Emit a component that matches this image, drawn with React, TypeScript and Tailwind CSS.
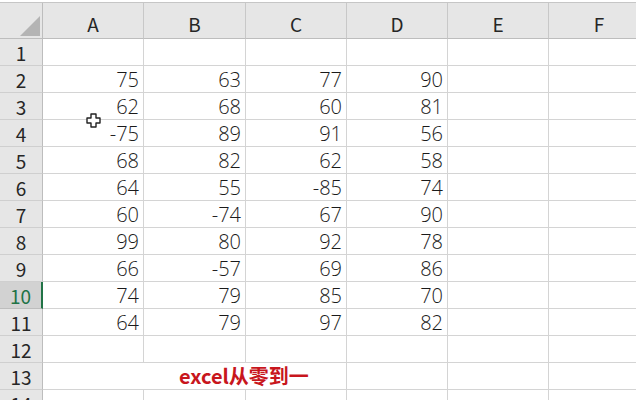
import React from 'react';

const cols = ['A', 'B', 'C', 'D', 'E', 'F'];

const rows: (number | null)[][] = [
  [null, null, null, null],
  [75, 63, 77, 90],
  [62, 68, 60, 81],
  [-75, 89, 91, 56],
  [68, 82, 62, 58],
  [64, 55, -85, 74],
  [60, -74, 67, 90],
  [99, 80, 92, 78],
  [66, -57, 69, 86],
  [74, 79, 85, 70],
  [64, 79, 97, 82],
  [null, null, null, null],
];

const font = { fontFamily: '"Noto Sans CJK SC", "Noto Sans", sans-serif' };
const numFont = { fontFamily: '"Open Sans", "Noto Sans CJK SC", sans-serif' };

const RowHead = ({ n, active }: { n: number; active?: boolean }) => (
  <div
    className={`h-[27px] flex items-center justify-center border-b text-[19px] leading-none ${
      active
        ? 'bg-[#d2d2d2] text-[#217346] border-r-2 border-r-[#217346] border-b-[#bdbdbd]'
        : 'bg-[#e6e6e6] text-[#262626] border-r border-r-[#bdbdbd] border-b-[#cfcfcf]'
    }`}
  >
    {n}
  </div>
);

const Cell = ({ v }: { v?: number | null }) => (
  <div
    className="h-[27px] border-r border-b border-[#d4d4d4] flex items-center justify-end pr-[4px] pt-[1px] text-[20px] font-light text-[#1a1a1a] leading-none"
    style={numFont}
  >
    {v ?? ''}
  </div>
);

const CursorIcon = () => (
  <svg className="absolute left-[86px] top-[113px]" width="15" height="15" viewBox="0 0 15 15">
    <path
      d="M5 1h5v4h4v5h-4v4H5v-4H1V5h4z"
      fill="#fff"
      stroke="#222"
      strokeWidth="1.4"
      strokeLinejoin="round"
    />
  </svg>
);

export default function App() {
  return (
    <div className="relative w-[636px] h-[400px] overflow-hidden bg-white" style={font}>
      <div className="h-[3px] bg-white border-b border-[#c6c6c6]" />
      <div className="grid grid-cols-[43px_101px_102px_101px_101px_101px_101px] w-max">
        {/* header */}
        <div className="h-[36px] bg-[#e6e6e6] border-r border-b border-[#bdbdbd] flex items-end justify-end pr-[2px] pb-[2px]">
          <svg width="20" height="20" viewBox="0 0 20 20">
            <polygon points="20,0 20,20 0,20" fill="#b4b4b4" />
          </svg>
        </div>
        {cols.map((c) => (
          <div
            key={c}
            className="h-[36px] bg-[#e6e6e6] border-r border-r-[#c8c8c8] border-b border-b-[#bdbdbd] flex items-end justify-center pb-[5px] text-[19px] leading-none text-[#262626]"
          >
            {c}
          </div>
        ))}

        {rows.map((r, i) => (
          <React.Fragment key={i}>
            <RowHead n={i + 1} active={i === 9} />
            {r.map((v, j) => (
              <Cell key={j} v={v} />
            ))}
            <Cell />
            <Cell />
          </React.Fragment>
        ))}

        <RowHead n={13} />
        <div className="col-span-3 h-[27px] border-r border-b border-[#d4d4d4] flex items-center pl-[136px] text-[20px] font-bold text-[#c8161d] leading-none">
          excel从零到一
        </div>
        <Cell />
        <Cell />
        <Cell />

        <RowHead n={14} />
        {cols.map((c) => (
          <Cell key={c} />
        ))}
      </div>
      <CursorIcon />
    </div>
  );
}
